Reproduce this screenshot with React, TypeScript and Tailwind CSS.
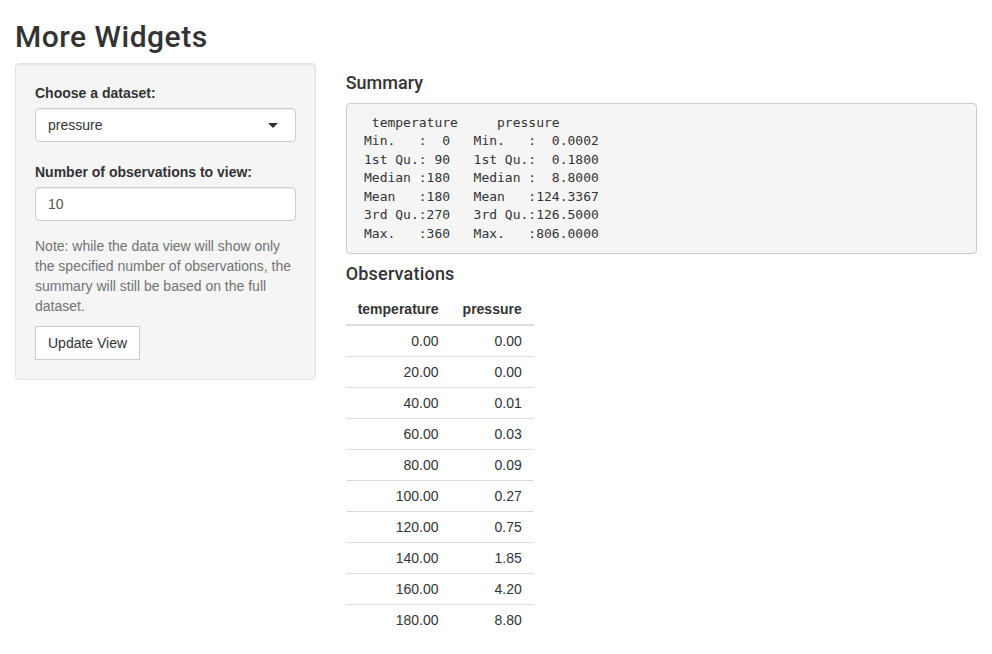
import { useState } from 'react';

const summaryText = `  temperature     pressure
 Min.   :  0   Min.   :  0.0002
 1st Qu.: 90   1st Qu.:  0.1800
 Median :180   Median :  8.8000
 Mean   :180   Mean   :124.3367
 3rd Qu.:270   3rd Qu.:126.5000
 Max.   :360   Max.   :806.0000`;

const rows: [string, string][] = [
    ['0.00', '0.00'],
    ['20.00', '0.00'],
    ['40.00', '0.01'],
    ['60.00', '0.03'],
    ['80.00', '0.09'],
    ['100.00', '0.27'],
    ['120.00', '0.75'],
    ['140.00', '1.85'],
    ['160.00', '4.20'],
    ['180.00', '8.80'],
];

export default function App() {
    const [obs, setObs] = useState('10');

    return (
        <div className="min-h-[654px] bg-white px-[15px] text-[14px] leading-[20px] text-[#333] [font-family:'Liberation_Sans',Arial,sans-serif]">
            <h2 className="mt-[20px] mb-[10px] text-[30px] leading-[33px] font-medium tracking-[0.5px] [font-family:Roboto,'Liberation_Sans',sans-serif]">More Widgets</h2>

            <div className="-mx-[15px] flex">
                {/* Sidebar */}
                <div className="w-1/3 px-[15px]">
                    <div className="rounded-[4px] border border-[#e3e3e3] bg-[#f5f5f5] p-[19px] shadow-[inset_0_1px_1px_rgba(0,0,0,0.05)]">
                        <div className="mb-[20px]">
                            <label className="mb-[5px] block font-bold">Choose a dataset:</label>
                            <div className="relative flex h-[34px] items-center rounded-[4px] border border-[#ccc] bg-white px-[12px] shadow-[inset_0_1px_1px_rgba(0,0,0,0.075)]">
                                <span>pressure</span>
                                <span className="absolute right-[17px] top-[14px] h-0 w-0 border-x-[5px] border-t-[5px] border-x-transparent border-t-[#333]" />
                            </div>
                        </div>

                        <div className="mb-[15px]">
                            <label className="mb-[5px] block font-bold">Number of observations to view:</label>
                            <input
                                type="number"
                                value={obs}
                                onChange={(e) => setObs(e.target.value)}
                                className="block h-[34px] w-full rounded-[4px] border border-[#ccc] bg-white px-[12px] py-[6px] text-[14px] text-[#555] shadow-[inset_0_1px_1px_rgba(0,0,0,0.075)] outline-none [appearance:textfield] [&::-webkit-inner-spin-button]:appearance-none"
                            />
                        </div>

                        <p className="mb-[10px] text-[#737373]">
                            Note: while the data view will show only the specified number of observations, the summary will still be based on the full dataset.
                        </p>

                        <button className="h-[34px] border border-[#ccc] bg-white px-[12px] text-[14px] text-[#333]">
                            Update View
                        </button>
                    </div>
                </div>

                {/* Main panel */}
                <div className="w-2/3 px-[15px]">
                    <h4 className="mt-[10px] mb-[10px] text-[18px] leading-[20px] font-medium [font-family:Roboto,'Liberation_Sans',sans-serif]">Summary</h4>
                    <pre className="mb-[10px] overflow-auto rounded-[4px] border border-[#ccc] bg-[#f5f5f5] p-[9.5px] text-[13px] leading-[18.57px] text-[#333] [font-family:'DejaVu_Sans_Mono',Menlo,monospace]">
                        {summaryText}
                    </pre>

                    <h4 className="mt-[10px] mb-[10px] text-[18px] leading-[20px] font-medium tracking-[0.2px] [font-family:Roboto,'Liberation_Sans',sans-serif]">Observations</h4>
                    <table className="border-collapse">
                        <thead>
                            <tr className="border-b-2 border-[#ddd]">
                                <th className="px-[12px] py-[5px] text-right font-bold">temperature</th>
                                <th className="px-[12px] py-[5px] text-right font-bold">pressure</th>
                            </tr>
                        </thead>
                        <tbody>
                            {rows.map(([t, p], i) => (
                                <tr key={t} className={i > 0 ? 'border-t border-[#ddd]' : ''}>
                                    <td className="px-[12px] py-[5px] text-right">{t}</td>
                                    <td className="px-[12px] py-[5px] text-right">{p}</td>
                                </tr>
                            ))}
                        </tbody>
                    </table>
                </div>
            </div>
        </div>
    );
}
